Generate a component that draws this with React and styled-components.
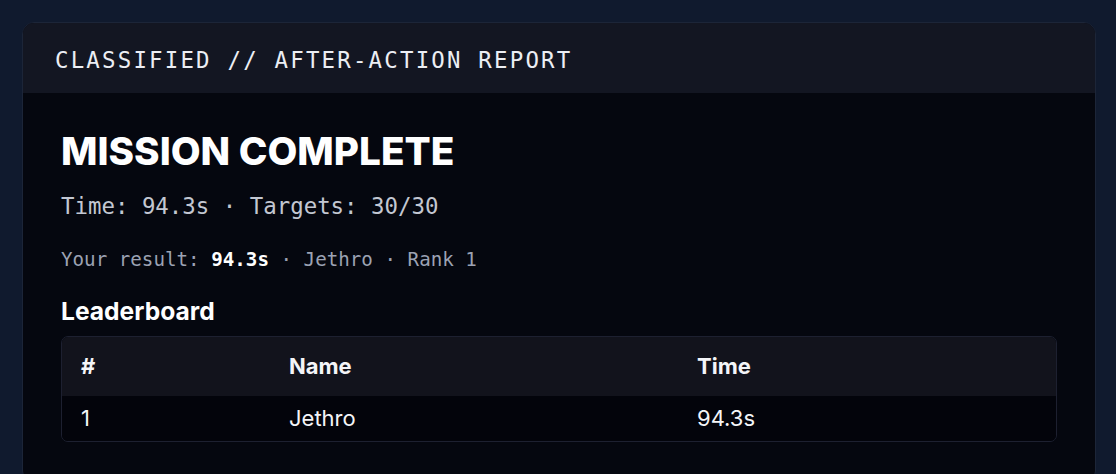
import React from "react";
import styled, { createGlobalStyle } from "styled-components";

const GlobalStyle = createGlobalStyle`
  html, body {
    margin: 0;
    background: #101a2e;
  }
  body {
    font-family: Inter, "Noto Sans", sans-serif;
    color: #f4f5f8;
  }
`;

const Page = styled.div`
  padding: 22px 20px 22px 22px;
  min-height: 100vh;
  box-sizing: border-box;
`;

const Card = styled.section`
  border: 1px solid #1c2538;
  border-radius: 12px;
  overflow: hidden;
  background: #05070f;
`;

const CardHeader = styled.header`
  height: 70px;
  box-sizing: border-box;
  display: flex;
  align-items: center;
  padding: 3px 32px 0;
  background: #131622;
  font-family: "DejaVu Sans Mono", "Liberation Mono", monospace;
  font-size: 22.4px;
  letter-spacing: 2.2px;
  color: #eceef4;
`;

const CardBody = styled.div`
  padding: 34px 38px 40px;
`;

const Title = styled.h1`
  margin: 0;
  font-size: 38.7px;
  font-weight: 800;
  line-height: 48px;
  color: #ffffff;
`;

const Stats = styled.p`
  margin: 18px 0 0;
  font-family: "DejaVu Sans Mono", "Liberation Mono", monospace;
  font-size: 22.4px;
  color: #c3c7d2;
`;

const Result = styled.p`
  margin: 29px 0 0;
  font-family: "DejaVu Sans Mono", "Liberation Mono", monospace;
  font-size: 19.2px;
  color: #9ca2b3;

  strong {
    color: #ffffff;
    font-weight: 700;
  }
`;

const SectionTitle = styled.h2`
  margin: 26px 0 10px;
  font-size: 24.6px;
  font-weight: 700;
  line-height: 29px;
  color: #ffffff;
`;

const Table = styled.div`
  border: 1px solid #1d2030;
  border-radius: 7px;
  overflow: hidden;
`;

const Row = styled.div`
  display: grid;
  grid-template-columns: 208px 408px 1fr;
  background: ${(p) => (p.$head ? "#12131c" : "#03040b")};
  font-size: 22px;
  font-weight: ${(p) => (p.$head ? 700 : 400)};
  line-height: 27px;
`;

const Cell = styled.div`
  padding: ${(p) => (p.$head ? "16px 19px" : "9px 19px")};
`;

const leaders = [{ rank: 1, name: "Jethro", time: "94.3s" }];

export default function App() {
  return (
    <>
      <GlobalStyle />
      <Page>
        <Card>
          <CardHeader>CLASSIFIED // AFTER-ACTION REPORT</CardHeader>
          <CardBody>
            <Title>MISSION COMPLETE</Title>
            <Stats>Time: 94.3s · Targets: 30/30</Stats>
            <Result>
              Your result: <strong>94.3s</strong> · Jethro · Rank 1
            </Result>
            <SectionTitle>Leaderboard</SectionTitle>
            <Table>
              <Row $head>
                <Cell $head>#</Cell>
                <Cell $head>Name</Cell>
                <Cell $head>Time</Cell>
              </Row>
              {leaders.map((l) => (
                <Row key={l.rank}>
                  <Cell>{l.rank}</Cell>
                  <Cell>{l.name}</Cell>
                  <Cell>{l.time}</Cell>
                </Row>
              ))}
            </Table>
          </CardBody>
        </Card>
      </Page>
    </>
  );
}
